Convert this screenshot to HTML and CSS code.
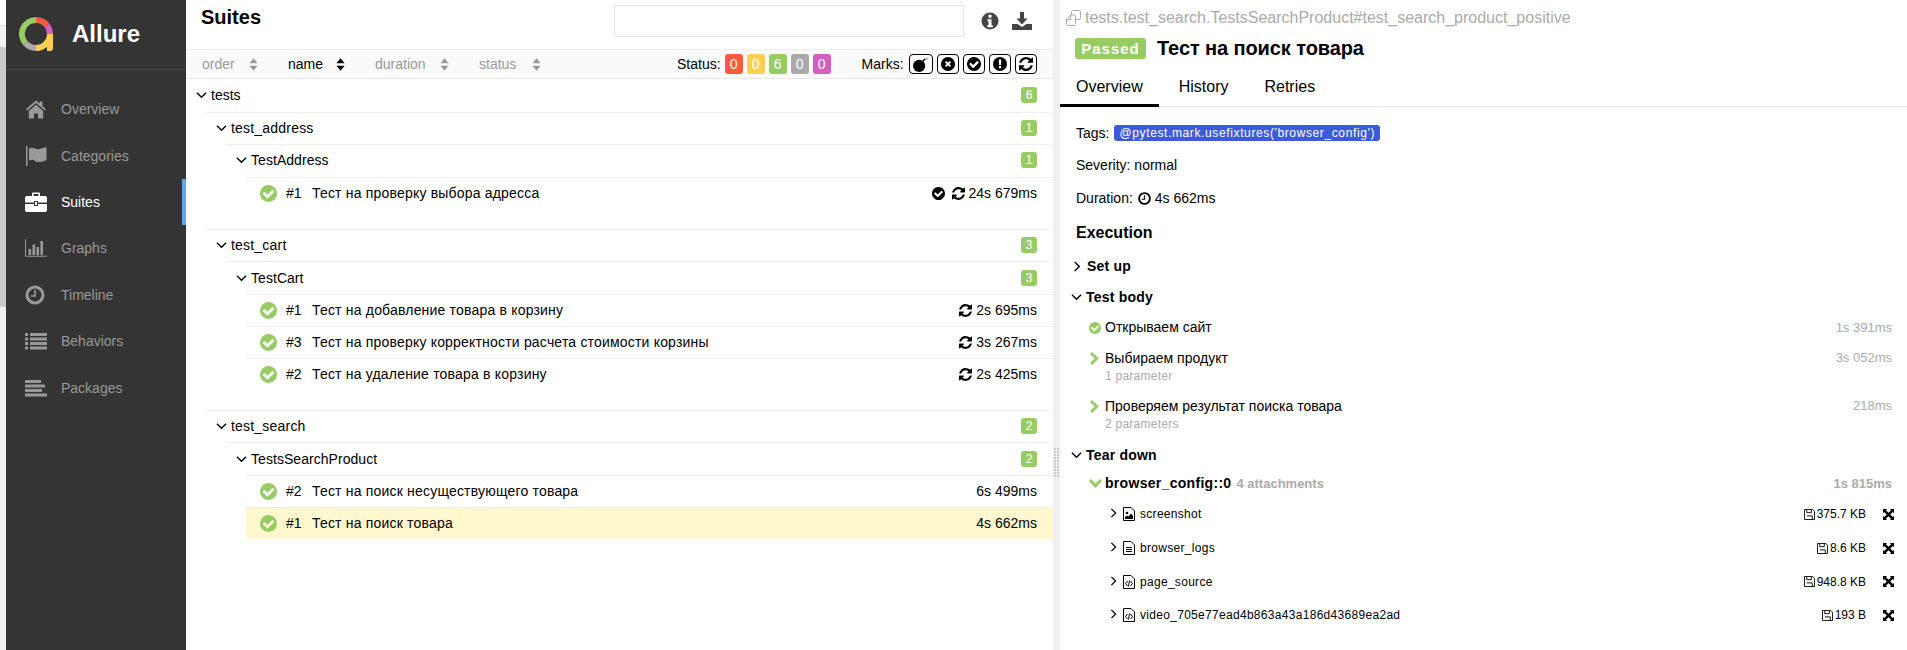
FILE: index.html
```html
<!DOCTYPE html>
<html lang="ru">
<head>
    <meta charset="UTF-8">
    <title>Allure Report</title>
    <link rel="stylesheet" href="styles.css">
</head>
<body>
<svg class="defs" width="0" height="0">
    <symbol id="i-check" viewBox="128 128 1536 1536"><path d="M1412 734q0-28-18-46l-91-90q-19-19-45-19t-45 19l-408 407-226-226q-19-19-45-19t-45 19l-91 90q-18 18-18 46 0 27 18 45l362 362q19 19 45 19 27 0 46-19l543-543q18-18 18-45zm252 162q0 209-103 385.5t-279.5 279.5-385.5 103-385.5-103-279.5-279.5-103-385.5 103-385.5 279.5-279.5 385.5-103 385.5 103 279.5 279.5 103 385.5z"/></symbol>
    <symbol id="i-refresh" viewBox="128 128 1536 1536"><path d="M1639 1056q0 5-1 7-64 268-268 434.5t-478 166.5q-146 0-282.5-55t-243.5-157l-129 129q-19 19-45 19t-45-19-19-45v-448q0-26 19-45t45-19h448q26 0 45 19t19 45-19 45l-137 137q71 66 161 102t187 36q134 0 250-65t186-179q11-17 53-117 8-23 30-23h192q13 0 22.5 9.5t9.5 22.5zm25-800v448q0 26-19 45t-45 19h-448q-26 0-45-19t-19-45 19-45l138-138q-148-137-349-137-134 0-250 65t-186 179q-11 17-53 117-8 23-30 23h-199q-13 0-22.5-9.5t-9.5-22.5v-7q65-268 270-434.5t480-166.5q146 0 284 55.5t245 156.5l130-129q19-19 45-19t45 19 19 45z"/></symbol>
    <symbol id="i-chev-down" viewBox="0 0 12 8"><path d="M1 1.5l5 5 5-5" fill="none" stroke="currentColor" stroke-width="1.5"/></symbol>
    <symbol id="i-chev-right" viewBox="0 0 8 12"><path d="M1.5 1l5 5-5 5" fill="none" stroke="currentColor" stroke-width="1.5"/></symbol>
    <symbol id="i-sort" viewBox="0 0 10 14"><path d="M5 0l4.5 5.5h-9zM5 14l4.5-5.5h-9z"/></symbol>
    <symbol id="i-save" viewBox="0 0 12 12"><path d="M.5.500h9l2 2v9h-11zM3 7.500h6v4M3 1v3h5V1" fill="none" stroke="currentColor"/></symbol>
    <symbol id="i-expand" viewBox="0 0 12 12"><path d="M0 0h4.500L3.200 1.300 6 4.100 8.800 1.300 7.500 0H12v4.500L10.700 3.200 7.900 6l2.800 2.800L12 7.500V12H7.500l1.300-1.300L6 7.900l-2.800 2.800L4.500 12H0V7.500l1.300 1.300L4.100 6 1.300 3.200 0 4.500z"/></symbol>
    <symbol id="i-file-code" viewBox="0 0 12 14"><path d="M.5.500h7.500l3.500 3.500v9.500H.5z" fill="none" stroke="currentColor"/><path d="M4.500 6L2.500 8.500l2 2.500M7.500 6l2 2.500-2 2.500M6.500 5.500l-1 6" fill="none" stroke="currentColor"/></symbol>
</svg>
<div class="page">
    <div class="edge">
        <div class="edge-top"></div>
        <div class="edge-mid"></div>
        <div class="edge-grey"></div>
        <div class="edge-low"></div>
    </div>

    <nav class="side">
        <div class="brand">
            <svg class="logo" viewBox="0 0 34 34" width="34" height="34" stroke-width="6">
                <path d="M17 3A14 14 0 0 1 28 8.400" stroke="#fd5a3e"/>
                <path d="M28 8.400A14 14 0 0 1 31 17" stroke="#d35ebe"/>
                <path d="M31 17A14 14 0 0 1 17 31" stroke="#ffd050"/>
                <path d="M17 31A14 14 0 0 1 6.500 26.300" stroke="#aaa"/>
                <path d="M6.500 26.300A14 14 0 0 1 17 3" stroke="#97cc64"/>
                <path class="logo-tail" d="M28 17h6v14q0 3-3 3h-3z"/>
            </svg>
            <span class="brand-name">Allure</span>
        </div>
        <ul class="menu">
            <li class="menu-item">
                <svg class="menu-icon" viewBox="0 0 22 20"><path d="M11 1.500L1 10l1.200 1.400L11 4l8.800 7.400L21 10l-3.500-3V2.500h-3v2zM3.800 12v7.500h5.200v-5h4v5h5.200V12L11 5.800z"/></svg>
                <span>Overview</span>
            </li>
            <li class="menu-item">
                <svg class="menu-icon" viewBox="0 0 22 20"><path d="M1 0h1.500v20H1zM4 2.500q3-1.500 6 0t8-.5q2-.5 3.500-1v13q-3 2-7 2t-5-1.500-5.500 0z"/></svg>
                <span>Categories</span>
            </li>
            <li class="menu-item active">
                <svg class="menu-icon" viewBox="0 0 22 20"><path d="M7 1.500Q7 .5 8 .5h6q1 0 1 1V4h5q2 0 2 2v4.500H13V9H9v1.500H0V6q0-2 2-2h5zM8.500 2v2h5V2zM0 12h9v2h4v-2h9v6q0 2-2 2H2q-2 0-2-2zM10 10h2v3h-2z"/></svg>
                <span>Suites</span>
            </li>
            <li class="menu-item">
                <svg class="menu-icon" viewBox="0 0 25 20"><path d="M0 0h1.200v18.800H25V20H0zM4 11h3v7H4zM8.500 6h3v12h-3zM13 9h3v9h-3zM17.500 2h3v16h-3z"/></svg>
                <span>Graphs</span>
            </li>
            <li class="menu-item">
                <svg class="menu-icon" viewBox="0 0 22 20"><circle cx="10" cy="10" r="8" fill="none" stroke="currentColor" stroke-width="3"/><path d="M10 5v6H6" fill="none" stroke="currentColor" stroke-width="1.600"/></svg>
                <span>Timeline</span>
            </li>
            <li class="menu-item">
                <svg class="menu-icon" viewBox="0 0 22 20"><path d="M0 2h3v3H0zM5 2h17v3H5zM0 6.500h3v3H0zM5 6.500h17v3H5zM0 11h3v3H0zM5 11h17v3H5zM0 15.500h3v3H0zM5 15.500h17v3H5z"/></svg>
                <span>Behaviors</span>
            </li>
            <li class="menu-item">
                <svg class="menu-icon" viewBox="0 0 22 20"><path d="M0 2h16v3H0zM0 6.500h20v3H0zM0 11h17v3H0zM0 15.500h22v3H0z"/></svg>
                <span>Packages</span>
            </li>
        </ul>
    </nav>

    <main class="list">
        <div class="list-head">
            <h2 class="list-title">Suites</h2>
            <div class="search"></div>
            <svg class="head-icon info" viewBox="0 0 18 18"><circle cx="9" cy="9" r="8.500"/><path d="M7.500 2.800h3v2.900h-3zM6.500 7.300h4v6h1.300v1.900H6.300v-1.900h1.200V9.200h-1z" fill="#fff"/></svg>
            <svg class="head-icon dl" viewBox="0 0 20 18"><path d="M8 0h4v6.500h3.500L10 12.500 4.500 6.500H8zM0 12h5.500l4.500 3 4.500-3H20v6H0z"/></svg>
        </div>
        <div class="sorter">
            <span class="sort-item s-order">order <svg class="sort-arrows"><use href="#i-sort"/></svg></span>
            <span class="sort-item s-name on">name <svg class="sort-arrows"><use href="#i-sort"/></svg></span>
            <span class="sort-item s-duration">duration <svg class="sort-arrows"><use href="#i-sort"/></svg></span>
            <span class="sort-item s-status">status <svg class="sort-arrows"><use href="#i-sort"/></svg></span>
            <span class="filter-label">Status:</span>
            <span class="count big c-failed">0</span>
            <span class="count big c-broken">0</span>
            <span class="count big c-passed">6</span>
            <span class="count big c-skipped">0</span>
            <span class="count big c-unknown">0</span>
            <span class="filter-label marks">Marks:</span>
            <span class="mark wide">
                <svg viewBox="0 0 20 16" width="20" height="15"><circle cx="8" cy="9.500" r="6.500"/><path d="M12 4.500l2.500-2.500" stroke="#000" stroke-width="1.600" fill="none"/><path d="M15 2.500l3-1.500" stroke="#888" fill="none"/></svg>
            </span>
            <span class="mark">
                <svg viewBox="0 0 14 14" width="14" height="14"><circle cx="7" cy="7" r="7"/><path d="M4.600 4.600l4.800 4.800M9.400 4.600L4.600 9.400" stroke="#fff" stroke-width="2"/></svg>
            </span>
            <span class="mark"><svg width="14" height="14"><use href="#i-check"/></svg></span>
            <span class="mark">
                <svg viewBox="0 0 14 14" width="14" height="14"><circle cx="7" cy="7" r="7"/><path d="M5.800 2.500h2.400l-.3 5.500H6.100zM5.900 9h2.200v2.200H5.900z" fill="#fff"/></svg>
            </span>
            <span class="mark"><svg width="14" height="14"><use href="#i-refresh"/></svg></span>
        </div>

        <div class="node lvl0">
            <svg class="chev"><use href="#i-chev-down"/></svg>
            <span class="node-name">tests</span>
            <span class="count c-passed">6</span>
        </div>

        <div class="group">
            <div class="node lvl1">
                <svg class="chev"><use href="#i-chev-down"/></svg>
                <span class="node-name">test_address</span>
                <span class="count c-passed">1</span>
            </div>
            <div class="node lvl2">
                <svg class="chev"><use href="#i-chev-down"/></svg>
                <span class="node-name">TestAddress</span>
                <span class="count c-passed">1</span>
            </div>
            <div class="leaf">
                <svg class="status-icon"><use href="#i-check"/></svg>
                <span class="leaf-num">#1</span>
                <span class="node-name">Тест на проверку выбора адресса</span>
                <svg class="flag-icon gap"><use href="#i-check"/></svg>
                <svg class="flag-icon"><use href="#i-refresh"/></svg>
                <span class="leaf-time">24s 679ms</span>
            </div>
        </div>

        <div class="group">
            <div class="node lvl1">
                <svg class="chev"><use href="#i-chev-down"/></svg>
                <span class="node-name">test_cart</span>
                <span class="count c-passed">3</span>
            </div>
            <div class="node lvl2">
                <svg class="chev"><use href="#i-chev-down"/></svg>
                <span class="node-name">TestCart</span>
                <span class="count c-passed">3</span>
            </div>
            <div class="leaf">
                <svg class="status-icon"><use href="#i-check"/></svg>
                <span class="leaf-num">#1</span>
                <span class="node-name">Тест на добавление товара в корзину</span>
                <svg class="flag-icon"><use href="#i-refresh"/></svg>
                <span class="leaf-time">2s 695ms</span>
            </div>
            <div class="leaf">
                <svg class="status-icon"><use href="#i-check"/></svg>
                <span class="leaf-num">#3</span>
                <span class="node-name">Тест на проверку корректности расчета стоимости корзины</span>
                <svg class="flag-icon"><use href="#i-refresh"/></svg>
                <span class="leaf-time">3s 267ms</span>
            </div>
            <div class="leaf">
                <svg class="status-icon"><use href="#i-check"/></svg>
                <span class="leaf-num">#2</span>
                <span class="node-name">Тест на удаление товара в корзину</span>
                <svg class="flag-icon"><use href="#i-refresh"/></svg>
                <span class="leaf-time">2s 425ms</span>
            </div>
        </div>

        <div class="group">
            <div class="node lvl1">
                <svg class="chev"><use href="#i-chev-down"/></svg>
                <span class="node-name">test_search</span>
                <span class="count c-passed">2</span>
            </div>
            <div class="node lvl2">
                <svg class="chev"><use href="#i-chev-down"/></svg>
                <span class="node-name">TestsSearchProduct</span>
                <span class="count c-passed">2</span>
            </div>
            <div class="leaf">
                <svg class="status-icon"><use href="#i-check"/></svg>
                <span class="leaf-num">#2</span>
                <span class="node-name">Тест на поиск несуществующего товара</span>
                <span class="leaf-time">6s 499ms</span>
            </div>
            <div class="leaf selected">
                <svg class="status-icon"><use href="#i-check"/></svg>
                <span class="leaf-num">#1</span>
                <span class="node-name">Тест на поиск товара</span>
                <span class="leaf-time">4s 662ms</span>
            </div>
        </div>
    </main>

    <div class="gutter"><div class="grip"></div></div>

    <section class="detail">
        <div class="path">
            <svg class="copy-icon" viewBox="0 0 18 16" width="18" height="16" stroke="currentColor"><path d="M6.500 5V1.500q0-1 1-1h7q1 0 1 1v7q0 1-1 1h-5"/><path d="M1.500 9L5.500 5h4q1 0 1 1v8.500q0 1-1 1h-7q-1 0-1-1zM1.500 9.500h4V5"/></svg>
            <span>tests.test_search.TestsSearchProduct#test_search_product_positive</span>
        </div>
        <div class="title-row">
            <span class="passed">Passed</span>
            <h2 class="test-title">Тест на поиск товара</h2>
        </div>
        <div class="tabs">
            <span class="tab on">Overview</span>
            <span class="tab">History</span>
            <span class="tab">Retries</span>
        </div>

        <div class="info-row tags-row">Tags: <span class="tag">@pytest.mark.usefixtures('browser_config')</span></div>
        <div class="info-row severity">Severity: normal</div>
        <div class="info-row">Duration:
            <svg class="clock" viewBox="0 0 14 14" width="13" height="13"><circle cx="7" cy="7" r="5.800" fill="none" stroke="#000" stroke-width="2"/><path d="M7 3.500V7.800H4" fill="none" stroke="#000" stroke-width="1.300"/></svg>
            4s 662ms</div>

        <h3 class="exec">Execution</h3>

        <div class="stage first">
            <svg class="stage-chev-r"><use href="#i-chev-right"/></svg>
            <span>Set up</span>
        </div>
        <div class="stage">
            <svg class="stage-chev"><use href="#i-chev-down"/></svg>
            <span>Test body</span>
        </div>

        <div class="step one">
            <svg class="step-check"><use href="#i-check"/></svg>
            <span class="step-name">Открываем сайт</span>
            <span class="step-time">1s 391ms</span>
        </div>
        <div class="step two">
            <svg class="step-arrow" viewBox="0 0 10 13"><path d="M2 0l7 6.500L2 13 0 11l4.500-4.500L0 2z"/></svg>
            <div class="step-text">
                <span class="step-name">Выбираем продукт</span>
                <span class="step-sub">1 parameter</span>
            </div>
            <span class="step-time">3s 052ms</span>
        </div>
        <div class="step two">
            <svg class="step-arrow" viewBox="0 0 10 13"><path d="M2 0l7 6.500L2 13 0 11l4.500-4.500L0 2z"/></svg>
            <div class="step-text">
                <span class="step-name">Проверяем результат поиска товара</span>
                <span class="step-sub">2 parameters</span>
            </div>
            <span class="step-time">218ms</span>
        </div>

        <div class="stage">
            <svg class="stage-chev"><use href="#i-chev-down"/></svg>
            <span>Tear down</span>
        </div>
        <div class="step fixture">
            <svg class="fix-arrow" viewBox="0 0 13 10"><path d="M0 2l2-2 4.500 4.500L11 0l2 2-6.500 7z"/></svg>
            <span class="fix-name">browser_config::0</span>
            <span class="fix-count">4 attachments</span>
            <span class="step-time">1s 815ms</span>
        </div>

        <div class="attach">
            <svg class="att-chev"><use href="#i-chev-right"/></svg>
            <svg class="att-icon" viewBox="0 0 12 14"><path d="M.5.500h7.500l3.500 3.500v9.500H.5z" fill="none" stroke="currentColor"/><circle cx="4" cy="6" r="1.300"/><path d="M2 12V10l2-1.500 1.500 1L8 6.500l2 2.500v3z"/></svg>
            <span class="att-name">screenshot</span>
            <svg class="att-save"><use href="#i-save"/></svg>
            <span class="att-size">375.7 KB</span>
            <svg class="att-expand"><use href="#i-expand"/></svg>
        </div>
        <div class="attach">
            <svg class="att-chev"><use href="#i-chev-right"/></svg>
            <svg class="att-icon" viewBox="0 0 12 14"><path d="M.5.500h7.500l3.500 3.500v9.500H.5zM3 6.500h6M3 8.500h6M3 10.500h6" fill="none" stroke="currentColor"/></svg>
            <span class="att-name">browser_logs</span>
            <svg class="att-save"><use href="#i-save"/></svg>
            <span class="att-size">8.6 KB</span>
            <svg class="att-expand"><use href="#i-expand"/></svg>
        </div>
        <div class="attach">
            <svg class="att-chev"><use href="#i-chev-right"/></svg>
            <svg class="att-icon"><use href="#i-file-code"/></svg>
            <span class="att-name">page_source</span>
            <svg class="att-save"><use href="#i-save"/></svg>
            <span class="att-size">948.8 KB</span>
            <svg class="att-expand"><use href="#i-expand"/></svg>
        </div>
        <div class="attach">
            <svg class="att-chev"><use href="#i-chev-right"/></svg>
            <svg class="att-icon"><use href="#i-file-code"/></svg>
            <span class="att-name">video_705e77ead4b863a43a186d43689ea2ad</span>
            <svg class="att-save"><use href="#i-save"/></svg>
            <span class="att-size">193 B</span>
            <svg class="att-expand"><use href="#i-expand"/></svg>
        </div>
    </section>
</div>
</body>
</html>
```

FILE: styles.css
```css
* {
    box-sizing: border-box;
    margin: 0;
    padding: 0;
}
html, body {
    height: 650px;
    overflow: hidden;
}
body {
    font-family: "Liberation Sans", Arial, sans-serif;
    font-size: 14px;
    color: #000;
    background: #fff;
}
.defs {
    display: block;
    height: 0;
}
svg {
    fill: currentColor;
    flex: none;
}
.page {
    display: flex;
    height: 650px;
}

/* left strip of the window behind the report */
.edge {
    width: 6px;
    display: flex;
    flex-direction: column;
}
.edge-top { height: 25px; background: #fff; }
.edge-mid { height: 22px; background: #f2f2f2; border-top: 1px solid #ddd; }
.edge-grey { height: 260px; background: #ccc; }
.edge-low { flex: 1; background: #f2f2f2; }

/* side menu */
.side {
    width: 180px;
    background: #343434;
    color: #999;
}
.brand {
    height: 70px;
    display: flex;
    align-items: center;
    padding: 0 0 2px 13px;
    border-bottom: 1px solid #4d4d4d;
}
.logo {
    fill: none;
}
.logo-tail {
    fill: #ffd050;
}
.brand-name {
    margin-left: 19px;
    font-size: 24px;
    font-weight: bold;
    color: #fff;
}
.menu {
    list-style: none;
    padding-top: 16px;
}
.menu-item {
    height: 46.4px;
    display: flex;
    align-items: center;
    padding-left: 19px;
}
.menu-icon {
    width: 22px;
    height: 20px;
    margin-right: 14px;
}
.menu-item.active {
    color: #fff;
    border-right: 4px solid #5fa9e6;
}

/* suites list */
.list {
    width: 867px;
    background: #fff;
}
.list-head {
    height: 49px;
    display: flex;
    align-items: flex-start;
}
.list-title {
    width: 428px;
    padding: 5px 0 0 15px;
    font-size: 20px;
    line-height: 24px;
}
.search {
    width: 350px;
    height: 32px;
    margin-top: 5px;
    border: 1px solid #e4e4e4;
}
.head-icon {
    color: #444;
}
.info {
    width: 18px;
    height: 18px;
    margin: 12px 0 0 17px;
}
.dl {
    width: 20px;
    height: 18px;
    margin: 12px 0 0 13px;
}
.sorter {
    height: 30px;
    display: flex;
    align-items: center;
    padding-right: 16px;
    background: #fafafa;
    border-top: 1px solid #eee;
    border-bottom: 1px solid #e8e8e8;
    color: #999;
}
.sort-item {
    display: flex;
    align-items: center;
}
.sort-item.on { color: #000; }
.sort-arrows {
    width: 9px;
    height: 13px;
}
.s-order { width: 86px; padding-left: 16px; }
.s-order .sort-arrows { margin-left: 14px; }
.s-name { width: 103px; padding-left: 16px; }
.s-name .sort-arrows { margin-left: 13px; }
.s-duration { width: 104px; }
.s-duration .sort-arrows { margin-left: 14px; }
.s-status { width: 198px; }
.s-status .sort-arrows { margin-left: 16px; }
.filter-label {
    color: #000;
    margin-right: 4px;
}
.marks { margin-left: 27px; margin-right: 5px; }
.count {
    width: 16px;
    height: 16px;
    margin-left: auto;
    border-radius: 3px;
    color: #fff;
    font-size: 12px;
    line-height: 16px;
    text-align: center;
}
.count.big {
    width: 18px;
    height: 20px;
    margin: 0 4px 0 0;
    font-size: 14px;
    line-height: 20px;
}
.c-failed { background: #fd5a3e; }
.c-broken { background: #ffd050; }
.c-passed { background: #97cc64; }
.c-skipped { background: #aaa; }
.c-unknown { background: #d35ebe; }
.mark {
    width: 22px;
    height: 20px;
    margin-right: 4px;
    display: flex;
    align-items: center;
    justify-content: center;
    border: 1px solid #000;
    border-radius: 4px;
    color: #000;
    background: #fff;
}
.mark.wide { width: 24px; }
.mark:last-child { margin-right: 0; }

.node, .leaf {
    display: flex;
    align-items: center;
    padding-right: 16px;
}
.node {
    height: 32.6px;
}
.lvl0 { padding-left: 10px; }
.lvl1 { margin-left: 21px; padding-left: 9px; padding-bottom: 1px; border-top: 1px solid #eee; letter-spacing: 0.2px; }
.lvl2 { margin-left: 40px; padding-left: 10px; padding-bottom: 1px; border-top: 1px solid #eee; letter-spacing: 0.05px; }
.count { letter-spacing: 0; }
.chev {
    width: 11px;
    height: 8px;
    margin-right: 4px;
}
.group {
    margin-bottom: 19.9px;
}
.leaf {
    height: 32px;
    margin-left: 60px;
    padding-left: 14px;
    border-top: 1px solid #eee;
}
.leaf .node-name {
    margin-right: auto;
    letter-spacing: 0.19px;
}
.leaf.selected {
    background: #fff8cf;
}
.status-icon {
    width: 17px;
    height: 17px;
    margin-right: 9px;
    color: #97cc64;
}
.leaf-num {
    width: 26px;
}
.flag-icon {
    width: 13px;
    height: 13px;
    margin-right: 4px;
}
.flag-icon.gap {
    margin-right: 7px;
}

.gutter {
    width: 7px;
    background: #eef0f4;
    display: flex;
    align-items: flex-start;
    justify-content: center;
}
.grip {
    width: 5px;
    height: 30px;
    margin-top: 447px;
    background-image: linear-gradient(#eef0f4 1px, transparent 1px), linear-gradient(90deg, #ccc 2px, #eef0f4 2px);
    background-size: 100% 3px, 3px 100%;
}

/* test detail */
.detail {
    flex: 1;
    min-width: 0;
    background: #fff;
}
.path {
    height: 33px;
    display: flex;
    align-items: center;
    padding: 2px 0 0 5px;
    color: #aaa;
    font-size: 16px;
}
.copy-icon {
    margin-right: 2px;
    fill: none;
}
.title-row {
    height: 30px;
    display: flex;
    align-items: center;
    padding-left: 15px;
}
.passed {
    width: 71px;
    height: 21px;
    margin: 0 11px 0 0;
    border-radius: 3px;
    background: #97cc64;
    color: #fff;
    font-size: 15px;
    font-weight: bold;
    line-height: 21px;
    letter-spacing: 1px;
    text-align: center;
}
.test-title {
    font-size: 20px;
    line-height: 24px;
    letter-spacing: -0.1px;
}
.tabs {
    height: 44px;
    display: flex;
    border-bottom: 1px solid #e8e8e8;
    font-size: 16px;
    line-height: 47px;
}
.tab {
    padding: 0 16px;
    margin-right: 4px;
    height: 44px;
}
.tab.on {
    border-bottom: 3px solid #000;
}
.tab:nth-child(2) { padding: 0 0 0 16px; margin-right: 36px; }
.tab:nth-child(3) { padding: 0; }
.info-row {
    height: 32.5px;
    padding-left: 16px;
    display: flex;
    align-items: center;
    gap: 4px;
}
.tags-row {
    margin-top: 10px;
    height: 31.5px;
}
.severity {
    height: 33.5px;
}
.clock {
    margin-left: 1px;
}
.tag {
    height: 16px;
    margin-left: 1px;
    padding: 0 5px;
    border-radius: 3px;
    background: #3d5bd9;
    color: #fff;
    font-size: 12px;
    line-height: 16px;
    letter-spacing: 0.62px;
}
.exec {
    height: 35px;
    padding-left: 16px;
    font-size: 16px;
    line-height: 35px;
    font-weight: bold;
}
.stage {
    height: 31px;
    display: flex;
    align-items: center;
    font-weight: bold;
    padding-left: 11px;
    letter-spacing: 0.2px;
}
.stage.first {
    height: 32px;
}
.stage-chev {
    width: 11px;
    height: 8px;
    margin-right: 4px;
}
.stage-chev-r {
    width: 8px;
    height: 11px;
    margin: 2px 6px 0 2px;
}
.step {
    display: flex;
    padding: 0 15px 0 29px;
}
.step.one {
    height: 30px;
    align-items: center;
}
.step.two {
    height: 48.25px;
    padding-top: 6px;
    align-items: flex-start;
}
.step.fixture {
    height: 27.5px;
    align-items: center;
}
.step-check {
    width: 12px;
    height: 12px;
    margin-right: 4px;
    color: #97cc64;
}
.step-arrow {
    width: 10px;
    height: 13px;
    margin: 3px 5px 0 1px;
    color: #97cc64;
}
.fix-arrow {
    width: 13px;
    height: 10px;
    margin-right: 3px;
    color: #97cc64;
}
.step-text {
    display: flex;
    flex-direction: column;
}
.step-name, .fix-name {
    line-height: 19px;
}
.fix-name {
    font-weight: bold;
    letter-spacing: 0.3px;
}
.fix-count {
    margin-left: 5px;
    color: #aaa;
    font-size: 13px;
    font-weight: bold;
}
.step-sub {
    color: #aaa;
    font-size: 12px;
    line-height: 16px;
    letter-spacing: 0.25px;
}
.step-time {
    margin-left: auto;
    color: #aaa;
    font-size: 13px;
    line-height: 18px;
}
.fixture .step-time { font-weight: bold; }
.attach {
    height: 33.7px;
    display: flex;
    align-items: center;
    padding: 0 13px 0 50px;
    font-size: 12px;
}
.att-chev {
    width: 7px;
    height: 10px;
    margin: 0 6px 2px 0;
}
.att-icon {
    width: 12px;
    height: 14px;
    margin-right: 5px;
}
.att-name {
    margin-right: auto;
    letter-spacing: 0.3px;
}
.att-save {
    width: 11px;
    height: 11px;
    margin-right: 2px;
}
.att-expand {
    width: 11px;
    height: 11px;
    margin-left: 17px;
}
```
